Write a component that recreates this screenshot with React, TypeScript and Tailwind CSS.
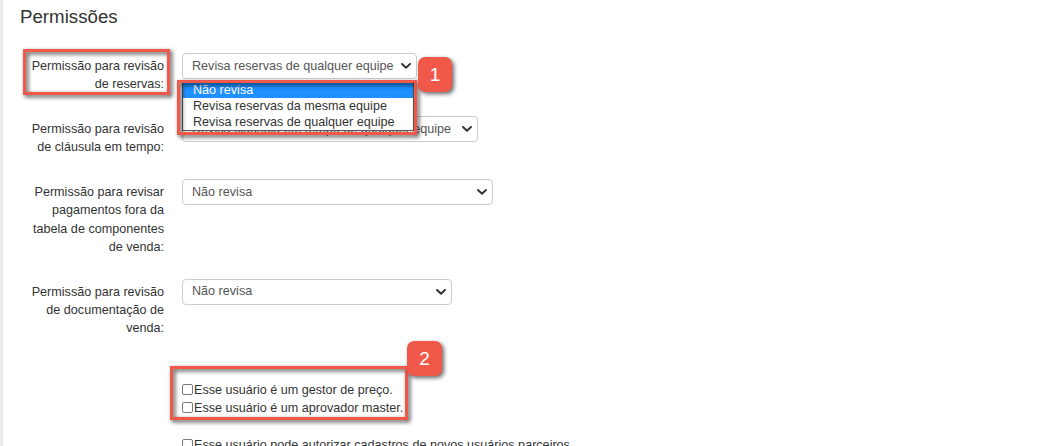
import React from "react";

const font = "font-['Liberation_Sans',Arial,Helvetica,sans-serif]";

function Chevron() {
  return (
    <svg width="10" height="6" viewBox="0 0 10 6" className="shrink-0">
      <path d="M1 1 L5 4.8 L9 1" fill="none" stroke="#333" strokeWidth="1.9" strokeLinecap="round" strokeLinejoin="round" />
    </svg>
  );
}

function Select({ value, width, children }: { value: string; width: string; children?: React.ReactNode }) {
  return (
    <div className={`relative ml-[18px] h-[26px] ${width} shrink-0`}>
      <div className="flex h-full w-full items-center justify-between overflow-hidden whitespace-nowrap rounded-[4px] border border-[#cccccc] bg-white pl-[9px] pr-[5px] text-[12.6px] text-[#555]">
        <span>{value}</span>
        <Chevron />
      </div>
      {children}
    </div>
  );
}

function Row({ lines, children }: { lines: string[]; children: React.ReactNode }) {
  return (
    <div className="mb-[22.5px] flex items-start">
      <div className="w-[144px] shrink-0 pt-[4px] text-right text-[12.6px] leading-[18.3px] text-[#333]">
        {lines.map((l, i) => (
          <div key={i} className="whitespace-nowrap">{l}</div>
        ))}
      </div>
      {children}
    </div>
  );
}

function Check({ label, className = "" }: { label: string; className?: string }) {
  return (
    <div className={`whitespace-nowrap text-[12.6px] leading-[18px] text-[#333] ${className}`}>
      <span className="mr-px inline-block h-[11px] w-[11px] rounded-[2px] border border-[#7a7a7a] bg-white align-[-1px]" />
      {label}
    </div>
  );
}

export default function App() {
  return (
    <div className={`relative flex h-[446px] w-[1053px] overflow-hidden bg-white ${font}`}>
      <div className="w-[3px] shrink-0 self-stretch bg-[#ececec]" />
      <div className="ml-[17px] flex w-[1017px] flex-col">
        <h2 className="mt-[6px] text-[18.7px] font-normal leading-[21px] text-[#333]">Permissões</h2>
        <div className="mt-[8px] h-px w-full bg-[#e5e5e5]" />
        <div className="mt-[18px]">
          <Row lines={["Permissão para revisão", "de reservas:"]}>
            <Select value="Revisa reservas de qualquer equipe" width="w-[235px]">
              <div className="absolute left-0 top-[28px] z-10 w-[232px] border border-[#5a5a5a] bg-white text-[12.6px] leading-[16px] text-[#333]">
                <div className="bg-[#1e90ff] pl-[10px] text-white">Não revisa</div>
                <div className="pl-[10px]">Revisa reservas da mesma equipe</div>
                <div className="pl-[10px]">Revisa reservas de qualquer equipe</div>
              </div>
            </Select>
          </Row>
          <Row lines={["Permissão para revisão", "de cláusula em tempo:"]}>
            <Select value="Revisa cláusula em tempo de qualquer equipe" width="w-[296px]" />
          </Row>
          <Row lines={["Permissão para revisar", "pagamentos fora da", "tabela de componentes", "de venda:"]}>
            <Select value="Não revisa" width="w-[311px]" />
          </Row>
          <Row lines={["Permissão para revisão", "de documentação de", "venda:"]}>
            <Select value="Não revisa" width="w-[270px]" />
          </Row>
          <div className="ml-[162px] mt-[43px]">
            <Check label="Esse usuário é um gestor de preço." />
            <Check label="Esse usuário é um aprovador master." />
            <Check className="mt-[19px]" label="Esse usuário pode autorizar cadastros de novos usuários parceiros" />
          </div>
        </div>
      </div>

      {/* annotation overlays */}
      <div className="pointer-events-none absolute left-[23px] top-[49px] z-20 h-[46px] w-[147px] border-[3px] border-[#f0584a] [filter:drop-shadow(2px_2px_2px_rgba(0,0,0,0.75))]" />
      <div className="pointer-events-none absolute left-[177px] top-[80px] z-20 h-[55px] w-[240px] border-[3px] border-[#f0584a] [filter:drop-shadow(2px_2px_2px_rgba(0,0,0,0.75))]" />
      <div className="pointer-events-none absolute left-[170px] top-[366px] z-20 h-[54px] w-[238px] border-[3px] border-[#f0584a] [filter:drop-shadow(2px_2px_2px_rgba(0,0,0,0.75))]" />
      <div className="absolute left-[418px] top-[57px] z-30 flex h-[35px] w-[34px] items-center justify-center rounded-[7px] bg-[#f0584a] text-[19px] leading-none text-white shadow-[2px_2px_4px_rgba(0,0,0,0.6)]">
        1
      </div>
      <div className="absolute left-[407px] top-[341px] z-30 flex h-[35px] w-[35px] items-center justify-center rounded-[7px] bg-[#f0584a] text-[19px] leading-none text-white shadow-[2px_2px_4px_rgba(0,0,0,0.6)]">
        2
      </div>
    </div>
  );
}
